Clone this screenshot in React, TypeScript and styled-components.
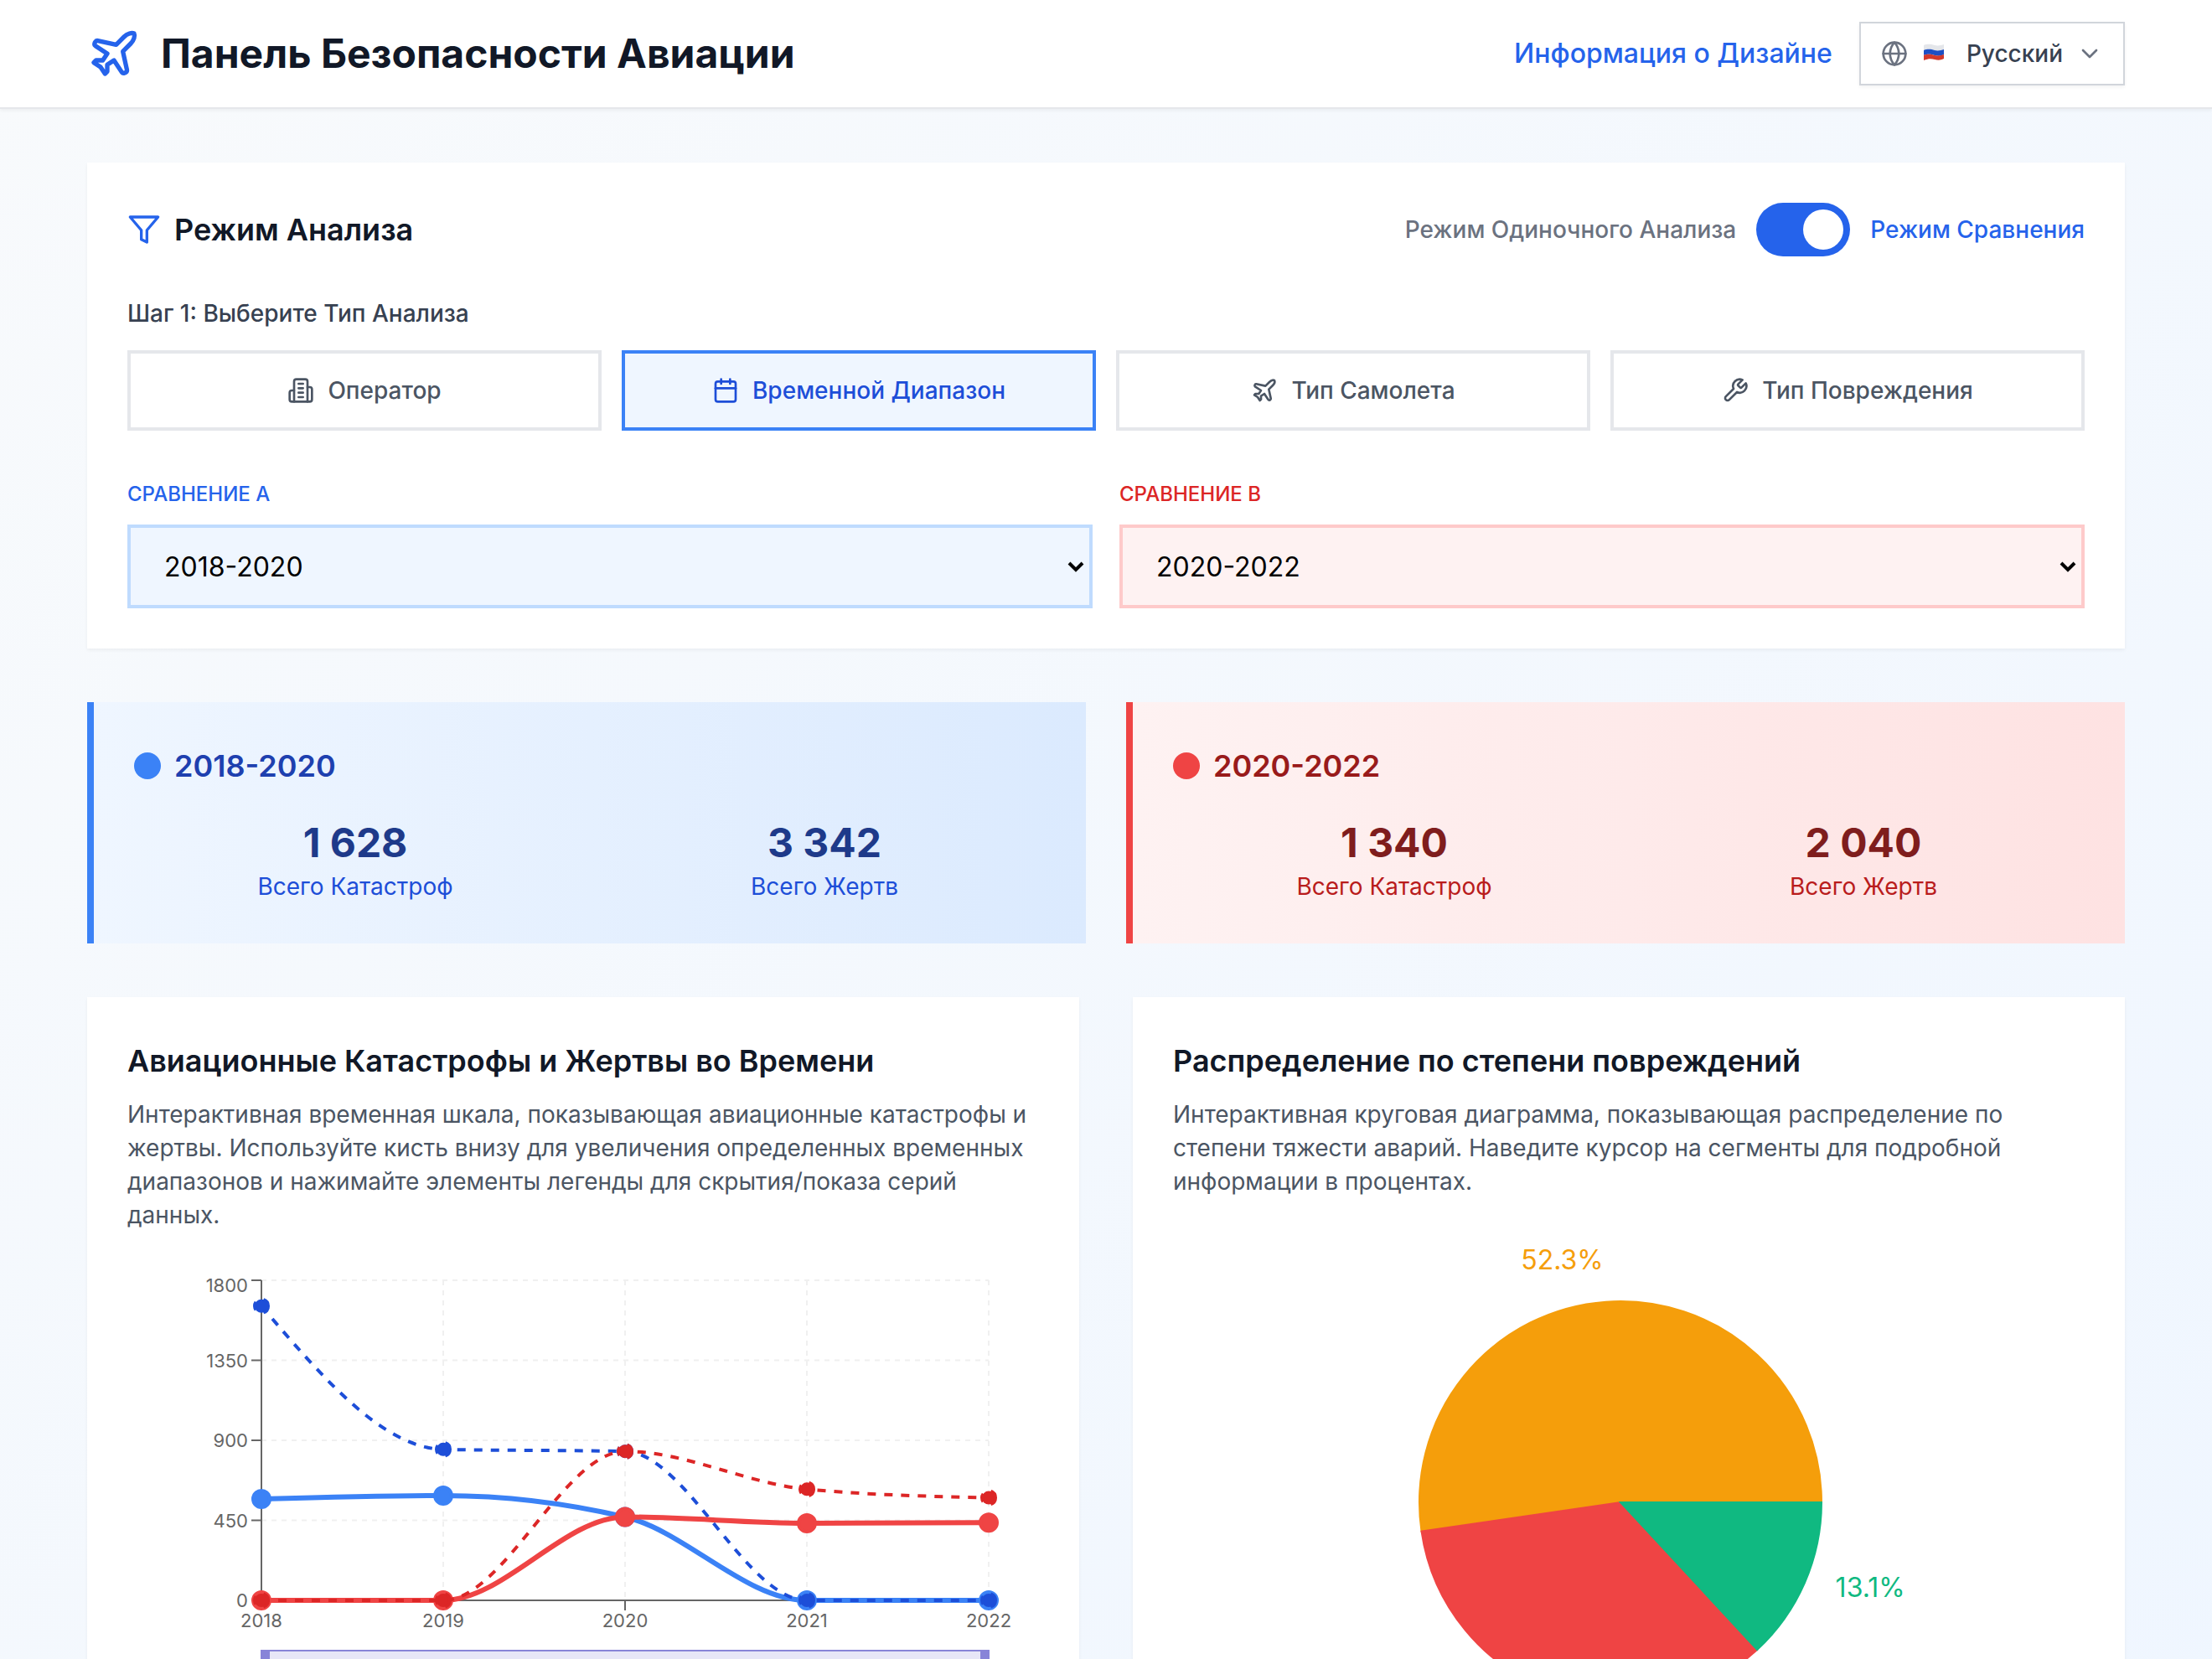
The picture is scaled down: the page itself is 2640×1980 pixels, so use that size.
import React, { useState } from "react";
import styled, { createGlobalStyle } from "styled-components";
import { Calendar, ChevronDown, Plane } from "lucide-react";

const GlobalStyle = createGlobalStyle`
  *, *::before, *::after { box-sizing: border-box; }
  body { margin: 0; }
  body, button, select, input { font-family: Inter, "Noto Sans", sans-serif; }
  h1, h2, h3, p { margin: 0; }
`;

type Tone = "blue" | "red";

const tones = {
  blue: {
    label: "#2563eb", fieldBorder: "#bfdbfe", from: "#eff6ff", to: "#dbeafe",
    accent: "#3b82f6", title: "#1e40af", number: "#1e3a8a", caption: "#1d4ed8",
  },
  red: {
    label: "#dc2626", fieldBorder: "#fecaca", from: "#fef2f2", to: "#fee2e2",
    accent: "#ef4444", title: "#991b1b", number: "#7f1d1d", caption: "#b91c1c",
  },
};

const Shell = styled.div`
  height: 100vh;
  overflow-y: auto;
  scrollbar-width: none;
`;

const Page = styled.div`
  min-height: 100%;
  background: linear-gradient(to bottom right, #f8fafc, #eff6ff);
  color: #111827;
  font-size: 32px;
  line-height: 48px;
`;

const Header = styled.header`
  background: #fff;
  border-bottom: 2px solid #e5e7eb;
  box-shadow: 0 2px 4px rgba(0, 0, 0, 0.05);
`;

const Container = styled.div`
  max-width: 2560px;
  margin: 0 auto;
  padding: 0 64px;
`;

const HeaderRow = styled(Container)`
  display: flex;
  align-items: center;
  justify-content: space-between;
  min-height: 128px;
`;

const Brand = styled.div`
  display: flex;
  align-items: center;
  gap: 24px;
  svg { color: #2563eb; }
`;

const BrandTitle = styled.h1`
  font-size: 48px;
  line-height: 64px;
  font-weight: 700;
`;

const HeaderActions = styled.nav`
  display: flex;
  align-items: center;
  gap: 32px;
`;

const DesignLink = styled.a`
  color: #2563eb;
  font-weight: 500;
  text-decoration: none;
`;

const LanguageButton = styled.button`
  display: flex;
  align-items: center;
  gap: 16px;
  padding: 16px 24px;
  border: 2px solid #d1d5db;
  background: #fff;
  box-shadow: 0 2px 4px rgba(0, 0, 0, 0.05);
  color: #374151;
  font-size: 28px;
  line-height: 40px;
  font-weight: 500;
  svg { color: #6b7280; }
`;

const Main = styled(Container).attrs({ as: "main" })`
  display: flex;
  flex-direction: column;
  gap: 64px;
  padding-top: 64px;
  padding-bottom: 64px;
`;

const Card = styled.section`
  background: #fff;
  padding: 48px;
  box-shadow: 0 2px 4px rgba(0, 0, 0, 0.05);
`;

const FilterCard = styled(Card)`
  display: flex;
  flex-direction: column;
  gap: 48px;
`;

const ModeRow = styled.div`
  display: flex;
  align-items: center;
  justify-content: space-between;
`;

const SectionTitle = styled.h2`
  display: flex;
  align-items: center;
  gap: 16px;
  font-size: 36px;
  line-height: 56px;
  font-weight: 600;
  svg { color: #2563eb; }
`;

const ModeSwitch = styled.div`
  display: flex;
  align-items: center;
  gap: 24px;
`;

const ModeLabel = styled.label<{ $active: boolean }>`
  font-size: 28px;
  line-height: 40px;
  font-weight: 500;
  color: ${(p) => (p.$active ? "#2563eb" : "#6b7280")};
`;

const Toggle = styled.input`
  appearance: none;
  display: flex;
  align-items: center;
  width: 112px;
  height: 64px;
  margin: 0;
  padding: 0 8px;
  border-radius: 32px;
  background: #d1d5db;
  &::before {
    content: "";
    width: 48px;
    height: 48px;
    border-radius: 50%;
    background: #fff;
  }
  &:checked {
    background: #2563eb;
    justify-content: flex-end;
  }
`;

const Step = styled.div`
  display: flex;
  flex-direction: column;
  gap: 24px;
`;

const StepLabel = styled.h3`
  font-size: 28px;
  line-height: 40px;
  font-weight: 500;
  color: #374151;
`;

const TypeGrid = styled.div`
  display: grid;
  grid-template-columns: repeat(4, 1fr);
  gap: 24px;
`;

const TypeButton = styled.button<{ $active: boolean }>`
  display: flex;
  align-items: center;
  justify-content: center;
  gap: 16px;
  padding: 24px;
  border: 4px solid ${(p) => (p.$active ? "#3b82f6" : "#e5e7eb")};
  background: ${(p) => (p.$active ? "#eff6ff" : "#fff")};
  color: ${(p) => (p.$active ? "#1d4ed8" : "#4b5563")};
  font-size: 28px;
  line-height: 40px;
  font-weight: 500;
`;

const FieldGrid = styled.div`
  display: grid;
  grid-template-columns: repeat(2, 1fr);
  gap: 32px;
  padding-top: 12px;
`;

const Field = styled.div`
  display: flex;
  flex-direction: column;
  gap: 20px;
`;

const FieldLabel = styled.label<{ $tone: Tone }>`
  font-size: 24px;
  line-height: 32px;
  font-weight: 500;
  text-transform: uppercase;
  color: ${(p) => tones[p.$tone].label};
`;

const SelectBox = styled.div`
  position: relative;
  display: flex;
`;

const Select = styled.select<{ $tone: Tone }>`
  appearance: none;
  width: 100%;
  height: 100px;
  padding: 0 40px;
  border: 4px solid ${(p) => tones[p.$tone].fieldBorder};
  border-radius: 0;
  background: ${(p) => tones[p.$tone].from};
  color: #000;
  font-size: 32px;
`;

const SelectArrow = styled.svg`
  position: absolute;
  right: 8px;
  top: 40px;
  pointer-events: none;
`;

const SummaryGrid = styled.div`
  display: grid;
  grid-template-columns: repeat(2, 1fr);
  gap: 48px;
`;

const SummaryCard = styled.section<{ $tone: Tone }>`
  display: flex;
  flex-direction: column;
  gap: 32px;
  padding: 48px;
  border-left: 8px solid ${(p) => tones[p.$tone].accent};
  background: linear-gradient(to right, ${(p) => tones[p.$tone].from}, ${(p) => tones[p.$tone].to});
`;

const SummaryTitle = styled.h3<{ $tone: Tone }>`
  display: flex;
  align-items: center;
  gap: 16px;
  font-size: 36px;
  line-height: 56px;
  font-weight: 600;
  color: ${(p) => tones[p.$tone].title};
  &::before {
    content: "";
    width: 32px;
    height: 32px;
    border-radius: 50%;
    background: ${(p) => tones[p.$tone].accent};
  }
`;

const StatGrid = styled.div`
  display: grid;
  grid-template-columns: repeat(2, 1fr);
  gap: 32px;
  text-align: center;
`;

const StatNumber = styled.p<{ $tone: Tone }>`
  font-size: 48px;
  line-height: 64px;
  font-weight: 700;
  color: ${(p) => tones[p.$tone].number};
`;

const StatCaption = styled.p<{ $tone: Tone }>`
  font-size: 28px;
  line-height: 40px;
  color: ${(p) => tones[p.$tone].caption};
`;

const ChartGrid = styled.div`
  display: grid;
  grid-template-columns: repeat(2, 1fr);
  gap: 64px;
`;

const Description = styled.p`
  margin: 16px 0 48px;
  font-size: 28px;
  line-height: 40px;
  color: #4b5563;
`;

const ChartSvg = styled.svg`
  display: block;
  width: 100%;
  height: auto;
  overflow: visible;
`;

const TickText = styled.text`
  font-size: 22px;
  fill: #666;
`;

const SliceText = styled.text`
  font-size: 32px;
`;

const LineIcon = styled.svg.attrs({
  viewBox: "0 0 24 24",
  fill: "none",
  stroke: "currentColor",
  strokeWidth: 2,
  strokeLinecap: "round",
  strokeLinejoin: "round",
  "aria-hidden": true,
})<{ $size: number }>`
  width: ${(p) => p.$size}px;
  height: ${(p) => p.$size}px;
`;

type IconProps = { size: number };

const BuildingIcon = ({ size }: IconProps) => (
  <LineIcon $size={size}>
    <path d="M6 22V4a2 2 0 0 1 2-2h8a2 2 0 0 1 2 2v18Z" />
    <path d="M6 12H4a2 2 0 0 0-2 2v6a2 2 0 0 0 2 2h2" />
    <path d="M18 9h2a2 2 0 0 1 2 2v9a2 2 0 0 1-2 2h-2" />
    <path d="M10 6h4M10 10h4M10 14h4M10 18h4" />
  </LineIcon>
);

const FilterIcon = ({ size }: IconProps) => (
  <LineIcon $size={size}>
    <polygon points="22 3 2 3 10 12.46 10 19 14 21 14 12.46 22 3" />
  </LineIcon>
);

const WrenchIcon = ({ size }: IconProps) => (
  <LineIcon $size={size}>
    <path d="M14.7 6.3a1 1 0 0 0 0 1.4l1.6 1.6a1 1 0 0 0 1.4 0l3.77-3.77a6 6 0 0 1-7.94 7.94l-6.91 6.91a2.12 2.12 0 0 1-3-3l6.91-6.91a6 6 0 0 1 7.94-7.94l-3.76 3.76z" />
  </LineIcon>
);

const GlobeIcon = ({ size }: IconProps) => (
  <LineIcon $size={size}>
    <circle cx="12" cy="12" r="10" />
    <path d="M2 12h20" />
    <path d="M12 2a15.3 15.3 0 0 1 4 10 15.3 15.3 0 0 1-4 10 15.3 15.3 0 0 1-4-10 15.3 15.3 0 0 1 4-10z" />
  </LineIcon>
);

const analysisTypes = [
  { name: "Оператор", Icon: BuildingIcon },
  { name: "Временной Диапазон", Icon: Calendar },
  { name: "Тип Самолета", Icon: Plane },
  { name: "Тип Повреждения", Icon: WrenchIcon },
];

const ranges = ["2018-2020", "2020-2022"];
const years = [2018, 2019, 2020, 2021, 2022];

const series = [
  { color: "#3b82f6", dashed: false, values: [570, 589, 469, 0, 0] },
  { color: "#1d4ed8", dashed: true, values: [1655, 849, 838, 0, 0] },
  { color: "#ef4444", dashed: false, values: [0, 0, 469, 434, 437] },
  { color: "#dc2626", dashed: true, values: [0, 0, 838, 625, 577] },
];

const plot = { left: 160, right: 1028, top: 10, bottom: 392, max: 1800 };
const xAt = (i: number) => plot.left + (i * (plot.right - plot.left)) / (years.length - 1);
const yAt = (v: number) => plot.bottom - (v / plot.max) * (plot.bottom - plot.top);

/* Monotone cubic interpolation, so the curve never overshoots its points. */
function monotonePath(points: [number, number][]) {
  const n = points.length;
  const h = points.slice(1).map((p, i) => p[0] - points[i][0]);
  const s = points.slice(1).map((p, i) => (p[1] - points[i][1]) / h[i]);
  const t: number[] = new Array(n).fill(0);
  for (let i = 1; i < n - 1; i++) {
    const p = (s[i - 1] * h[i] + s[i] * h[i - 1]) / (h[i - 1] + h[i]);
    t[i] =
      (Math.sign(s[i - 1]) + Math.sign(s[i])) *
      Math.min(Math.abs(s[i - 1]), Math.abs(s[i]), 0.5 * Math.abs(p));
  }
  t[0] = (3 * s[0] - t[1]) / 2;
  t[n - 1] = (3 * s[n - 2] - t[n - 2]) / 2;
  let d = `M${points[0][0]},${points[0][1]}`;
  for (let i = 1; i < n; i++) {
    const dx = h[i - 1] / 3;
    const [x0, y0] = points[i - 1];
    const [x1, y1] = points[i];
    d += `C${x0 + dx},${y0 + dx * t[i - 1]},${x1 - dx},${y1 - dx * t[i]},${x1},${y1}`;
  }
  return d;
}

function Timeline() {
  const ticks = [0, 450, 900, 1350, 1800];
  return (
    <ChartSvg viewBox="0 0 1088 560" role="img" aria-label="Временная шкала">
      <g stroke="#f0f0f0" strokeWidth={2} strokeDasharray="6 6">
        {ticks.map((v) => (
          <line key={v} x1={plot.left} x2={plot.right} y1={yAt(v)} y2={yAt(v)} />
        ))}
        {years.map((y, i) => (
          <line key={y} x1={xAt(i)} x2={xAt(i)} y1={plot.top} y2={plot.bottom} />
        ))}
      </g>
      <g stroke="#666" strokeWidth={2}>
        <line x1={plot.left} x2={plot.right} y1={plot.bottom} y2={plot.bottom} />
        <line x1={plot.left} x2={plot.left} y1={plot.top} y2={plot.bottom} />
        {ticks.map((v) => (
          <line key={v} x1={plot.left - 12} x2={plot.left} y1={yAt(v)} y2={yAt(v)} />
        ))}
        {years.map((y, i) => (
          <line key={y} x1={xAt(i)} x2={xAt(i)} y1={plot.bottom} y2={plot.bottom + 12} />
        ))}
      </g>
      {ticks.map((v) => (
        <TickText key={v} x={plot.left - 16} y={Math.max(yAt(v), 16) + 8} textAnchor="end">
          {v}
        </TickText>
      ))}
      {years.map((y, i) => (
        <TickText key={y} x={xAt(i)} y={plot.bottom + 32} textAnchor="middle">
          {y}
        </TickText>
      ))}
      {series.map(({ color, dashed, values }) => {
        const points = values.map((v, i) => [xAt(i), yAt(v)] as [number, number]);
        const dash = dashed ? "10 10" : undefined;
        return (
          <g key={color} stroke={color} strokeDasharray={dash}>
            <path d={monotonePath(points)} fill="none" strokeWidth={dashed ? 4 : 6} />
            {points.map(([x, y]) => (
              <circle key={x} cx={x} cy={y} r={dashed ? 8 : 10} fill={color} strokeWidth={4} />
            ))}
          </g>
        );
      })}
      <g>
        <rect x={plot.left} y={452} width={868} height={80} fill="#8884d8" fillOpacity={0.2} />
        <rect x={plot.left} y={452} width={868} height={80} fill="none" stroke="#8884d8" strokeWidth={2} />
        <rect x={plot.left} y={452} width={10} height={80} fill="#8884d8" />
        <rect x={plot.right - 10} y={452} width={10} height={80} fill="#8884d8" />
      </g>
    </ChartSvg>
  );
}

const slices = [
  { color: "#f59e0b", share: 52.3, labelled: true },
  { color: "#ef4444", share: 34.6, labelled: false },
  { color: "#10b981", share: 13.1, labelled: true },
];

function Pie() {
  const cx = 534;
  const cy = 315;
  const polar = (r: number, turn: number) => {
    const a = turn * 2 * Math.PI;
    return [cx + r * Math.cos(a), cy - r * Math.sin(a)];
  };
  let start = 0;
  return (
    <ChartSvg viewBox="0 0 1088 640" role="img" aria-label="Круговая диаграмма">
      {slices.map(({ color, share, labelled }) => {
        const part = share / 100;
        const [x0, y0] = polar(240, start);
        const [x1, y1] = polar(240, start + part);
        const [lx, ly] = polar(280, start + part / 2);
        start += part;
        return (
          <g key={color} fill={color}>
            <path
              d={`M${x0},${y0}A240,240,0,${part > 0.5 ? 1 : 0},0,${x1},${y1}L${cx},${cy}Z`}
              stroke={color}
              strokeWidth={2}
            />
            {labelled && (
              <SliceText x={lx} y={ly + 1} textAnchor={lx > cx ? "start" : "end"}>
                {`${share}%`}
              </SliceText>
            )}
          </g>
        );
      })}
    </ChartSvg>
  );
}

function RussianFlag() {
  return (
    <svg width="38" height="28" viewBox="0 0 38 28" aria-hidden="true">
      <path d="M3 4C8 2 12 3 16 4S24 4 27 3V10C23 11 20 11 16 10S8 9 3 10Z" fill="#e4e6ea" />
      <path d="M3 10C8 8 12 9 16 10S24 10 27 9V15C23 17 20 17 16 16S8 14 3 16Z" fill="#1d4fc4" />
      <path d="M3 16C8 14 12 15 16 16S24 16 27 15V20C23 22 20 22 16 21S8 20 3 22Z" fill="#d23a2c" />
    </svg>
  );
}

function RangeField({ id, tone, label, initial }: { id: string; tone: Tone; label: string; initial: string }) {
  return (
    <Field>
      <FieldLabel htmlFor={id} $tone={tone}>{label}</FieldLabel>
      <SelectBox>
        <Select id={id} $tone={tone} defaultValue={initial}>
          {ranges.map((r) => (
            <option key={r}>{r}</option>
          ))}
        </Select>
        <SelectArrow width="24" height="20" viewBox="0 0 24 20" aria-hidden="true">
          <path d="M4 6l8 8 8-8" fill="none" stroke="#000" strokeWidth="4" />
        </SelectArrow>
      </SelectBox>
    </Field>
  );
}

function Summary({ tone, title, crashes, victims }: { tone: Tone; title: string; crashes: string; victims: string }) {
  return (
    <SummaryCard $tone={tone}>
      <SummaryTitle $tone={tone}>{title}</SummaryTitle>
      <StatGrid>
        <div>
          <StatNumber $tone={tone}>{crashes}</StatNumber>
          <StatCaption $tone={tone}>Всего Катастроф</StatCaption>
        </div>
        <div>
          <StatNumber $tone={tone}>{victims}</StatNumber>
          <StatCaption $tone={tone}>Всего Жертв</StatCaption>
        </div>
      </StatGrid>
    </SummaryCard>
  );
}

export default function App() {
  const [compare, setCompare] = useState(true);
  const [type, setType] = useState("Временной Диапазон");
  return (
    <Shell>
      <GlobalStyle />
      <Page>
        <Header>
          <HeaderRow>
            <Brand>
              <Plane size={64} />
              <BrandTitle>Панель Безопасности Авиации</BrandTitle>
            </Brand>
            <HeaderActions>
              <DesignLink href="#design">Информация о Дизайне</DesignLink>
              <LanguageButton type="button">
                <GlobeIcon size={32} />
                <RussianFlag />
                Русский
                <ChevronDown size={32} />
              </LanguageButton>
            </HeaderActions>
          </HeaderRow>
        </Header>
        <Main>
          <FilterCard>
            <ModeRow>
              <SectionTitle>
                <FilterIcon size={40} />
                Режим Анализа
              </SectionTitle>
              <ModeSwitch>
                <ModeLabel htmlFor="mode" $active={!compare}>Режим Одиночного Анализа</ModeLabel>
                <Toggle
                  id="mode"
                  type="checkbox"
                  role="switch"
                  checked={compare}
                  onChange={(e) => setCompare(e.target.checked)}
                />
                <ModeLabel htmlFor="mode" $active={compare}>Режим Сравнения</ModeLabel>
              </ModeSwitch>
            </ModeRow>
            <Step>
              <StepLabel>Шаг 1: Выберите Тип Анализа</StepLabel>
              <TypeGrid>
                {analysisTypes.map(({ name, Icon }) => (
                  <TypeButton key={name} type="button" $active={name === type} onClick={() => setType(name)}>
                    <Icon size={32} />
                    {name}
                  </TypeButton>
                ))}
              </TypeGrid>
            </Step>
            <FieldGrid>
              <RangeField id="range-a" tone="blue" label="Сравнение A" initial={ranges[0]} />
              <RangeField id="range-b" tone="red" label="Сравнение B" initial={ranges[1]} />
            </FieldGrid>
          </FilterCard>
          <SummaryGrid>
            <Summary tone="blue" title={ranges[0]} crashes={"1\u00a0628"} victims={"3\u00a0342"} />
            <Summary tone="red" title={ranges[1]} crashes={"1\u00a0340"} victims={"2\u00a0040"} />
          </SummaryGrid>
          <ChartGrid>
            <Card>
              <SectionTitle>Авиационные Катастрофы и Жертвы во Времени</SectionTitle>
              <Description>
                Интерактивная временная шкала, показывающая авиационные катастрофы и жертвы. Используйте кисть
                внизу для увеличения определенных временных диапазонов и нажимайте элементы легенды для
                скрытия/показа серий данных.
              </Description>
              <Timeline />
            </Card>
            <Card>
              <SectionTitle>Распределение по степени повреждений</SectionTitle>
              <Description>
                Интерактивная круговая диаграмма, показывающая распределение по степени тяжести аварий.
                Наведите курсор на сегменты для подробной информации в процентах.
              </Description>
              <Pie />
            </Card>
          </ChartGrid>
        </Main>
      </Page>
    </Shell>
  );
}
